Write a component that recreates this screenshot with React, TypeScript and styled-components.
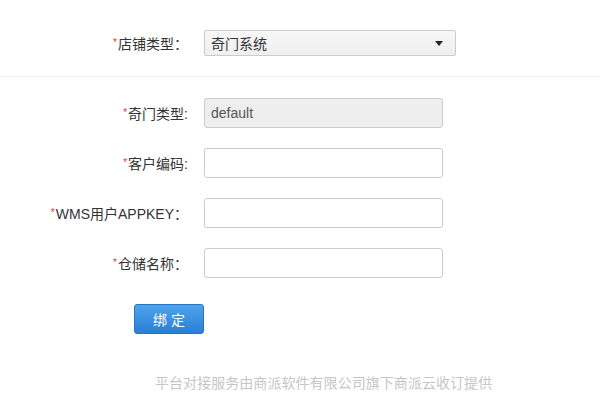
import React from "react";
import styled, { createGlobalStyle } from "styled-components";

const Global = createGlobalStyle`
  html, body { margin: 0; padding: 0; background: #fff; }
  body { font-family: "Liberation Sans", "Noto Sans CJK SC", sans-serif; font-size: 14px; color: #333; }
`;

const Page = styled.div`
  width: 600px;
  height: 405px;
  display: flex;
  flex-direction: column;
`;

const TopSection = styled.div`
  padding: 30px 0 20px;
  border-bottom: 1px solid #eee;
`;

const Form = styled.div`
  display: flex;
  flex-direction: column;
  gap: 20px;
  padding-top: 21px;
`;

const Row = styled.div`
  display: flex;
  align-items: center;
  height: ${(p: { $h?: number }) => p.$h ?? 30}px;
`;

const Label = styled.label`
  width: 188px;
  flex: none;
  text-align: right;
  margin-right: 16px;
  font-size: 14px;
  color: #333;
  white-space: nowrap;
`;

const Star = styled.span`
  color: #e33;
  font-size: 10px;
  position: relative;
  top: -3px;
  margin-right: 1px;
`;

const SelectBox = styled.div`
  box-sizing: border-box;
  width: 252px;
  height: 26px;
  border: 1px solid #ccc;
  border-radius: 2px;
  background: linear-gradient(#f7f7f7, #efefef);
  display: flex;
  align-items: center;
  justify-content: space-between;
  padding: 0 12px 0 6px;
  font-size: 14px;
  color: #333;
`;

const Caret = styled.span`
  width: 0;
  height: 0;
  border-left: 4px solid transparent;
  border-right: 4px solid transparent;
  border-top: 5px solid #222;
`;

const Input = styled.div<{ $disabled?: boolean }>`
  box-sizing: border-box;
  width: 239px;
  height: 30px;
  border: 1px solid #ccc;
  border-radius: 3px;
  background: ${(p) => (p.$disabled ? "#eee" : "#fff")};
  color: #555;
  font-size: 14px;
  display: flex;
  align-items: center;
  padding: 0 6px;
`;

const ButtonRow = styled.div`
  padding: 26px 0 0 134px;
`;

const Button = styled.button`
  box-sizing: border-box;
  width: 70px;
  height: 30px;
  border: 1px solid #2a73c2;
  border-radius: 3px;
  background: linear-gradient(#4fa3ec, #2b7fd5);
  color: #fff;
  font-family: "Liberation Sans", "Noto Sans CJK SC", sans-serif;
  font-size: 14px;
  padding: 0;
  cursor: pointer;
`;

const Footer = styled.div`
  padding: 38px 0 0 155px;
  font-size: 14px;
  color: #c6c6c6;
  letter-spacing: 0.05px;
`;

const fields = [
  { label: "奇门类型:", value: "default", disabled: true },
  { label: "客户编码:", value: "" },
  { label: "WMS用户APPKEY：", value: "" },
  { label: "仓储名称：", value: "" },
];

export default function App() {
  return (
    <Page>
      <Global />
      <TopSection>
        <Row $h={26}>
          <Label>
            <Star>*</Star>店铺类型：
          </Label>
          <SelectBox>
            <span>奇门系统</span>
            <Caret />
          </SelectBox>
        </Row>
      </TopSection>
      <Form>
        {fields.map((f) => (
          <Row key={f.label}>
            <Label>
              <Star>*</Star>
              {f.label}
            </Label>
            <Input $disabled={f.disabled}>{f.value}</Input>
          </Row>
        ))}
      </Form>
      <ButtonRow>
        <Button>绑 定</Button>
      </ButtonRow>
      <Footer>平台对接服务由商派软件有限公司旗下商派云收订提供</Footer>
    </Page>
  );
}
